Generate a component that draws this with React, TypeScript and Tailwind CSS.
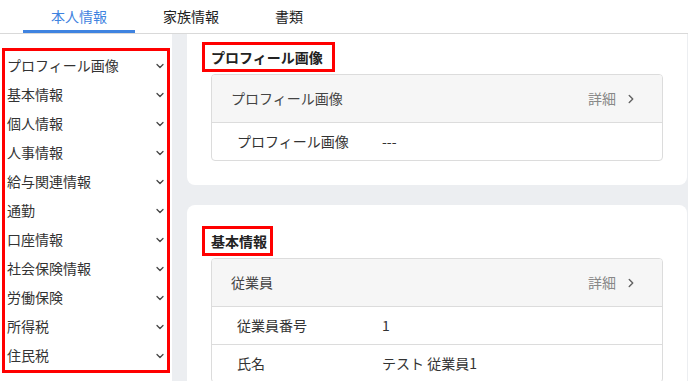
import { ChevronDown, ChevronRight } from "lucide-react";

const tabs = ["本人情報", "家族情報", "書類"];

const menu = [
  "プロフィール画像",
  "基本情報",
  "個人情報",
  "人事情報",
  "給与関連情報",
  "通勤",
  "口座情報",
  "社会保険情報",
  "労働保険",
  "所得税",
  "住民税",
];

type Row = { label: string; value: string };

function InfoTable({ title, rows }: { title: string; rows: Row[] }) {
  return (
    <div className="mx-[24px] overflow-hidden rounded-[4px] border border-[#dcdcdc]">
      <div className="flex h-[47px] items-center justify-between bg-[#f6f6f6] pl-[19px] pr-[24px] text-[14px] text-[#444]">
        <span>{title}</span>
        <span className="flex items-center gap-[8px] text-[#888]">
          詳細
          <ChevronRight className="h-[14px] w-[14px] text-[#666]" strokeWidth={2.5} aria-hidden />
        </span>
      </div>
      {rows.map((r) => (
        <div key={r.label} className="flex h-[38px] items-center border-t border-[#dcdcdc] text-[14px] text-[#333]">
          <span className="w-[170px] shrink-0 pl-[25px]">{r.label}</span>
          <span>{r.value}</span>
        </div>
      ))}
    </div>
  );
}

function Heading({ text, width }: { text: string; width: string }) {
  return (
    <div className={`ml-[15px] flex h-[30px] items-center border-[3px] border-[#ff0000] pl-[6px] text-[14px] font-bold text-[#222] ${width}`}>
      {text}
    </div>
  );
}

export default function App() {
  return (
    <div
      className="flex h-[381px] w-[688px] flex-col overflow-hidden bg-white text-[#333]"
      style={{ fontFamily: '"Noto Sans CJK JP", "Noto Sans", sans-serif' }}
    >
      <div className="flex h-[34px] shrink-0 border-b border-[#d9d9d9] pl-[23px]">
        {tabs.map((t, i) => (
          <div
            key={t}
            className={`flex h-[33px] items-center px-[28px] text-[14px] ${
              i === 0 ? "border-b-[3px] border-[#3f83e0] pt-[3px] text-[#3f83e0]" : "text-[#222]"
            }`}
          >
            {t}
          </div>
        ))}
      </div>

      <div className="flex min-h-0 flex-1">
        <aside className="w-[172px] shrink-0 bg-white pl-[2px] pr-[2px] pt-[14px]">
          <ul className="border-[3px] border-[#ff0000]">
            {menu.map((m) => (
              <li key={m} className="flex h-[29px] items-center justify-between pl-[2px] pr-[1px] text-[14px] text-[#333]">
                <span>{m}</span>
                <ChevronDown className="h-[12px] w-[12px] text-[#444]" strokeWidth={2.5} aria-hidden />
              </li>
            ))}
          </ul>
        </aside>

        <main className="flex-1 bg-[#eceef1] pl-[15px] pr-[1px]">
          <section className="rounded-b-[8px] bg-white pb-[24px] pt-[8px]">
            <Heading text="プロフィール画像" width="w-[133px]" />
            <div className="mt-[2px]">
              <InfoTable title="プロフィール画像" rows={[{ label: "プロフィール画像", value: "---" }]} />
            </div>
          </section>

          <section className="mt-[20px] rounded-[8px] bg-white pt-[21px] pb-[24px]">
            <Heading text="基本情報" width="w-[71px]" />
            <div className="mt-[2px]">
              <InfoTable
                title="従業員"
                rows={[
                  { label: "従業員番号", value: "1" },
                  { label: "氏名", value: "テスト 従業員1" },
                ]}
              />
            </div>
          </section>
        </main>
      </div>
    </div>
  );
}
